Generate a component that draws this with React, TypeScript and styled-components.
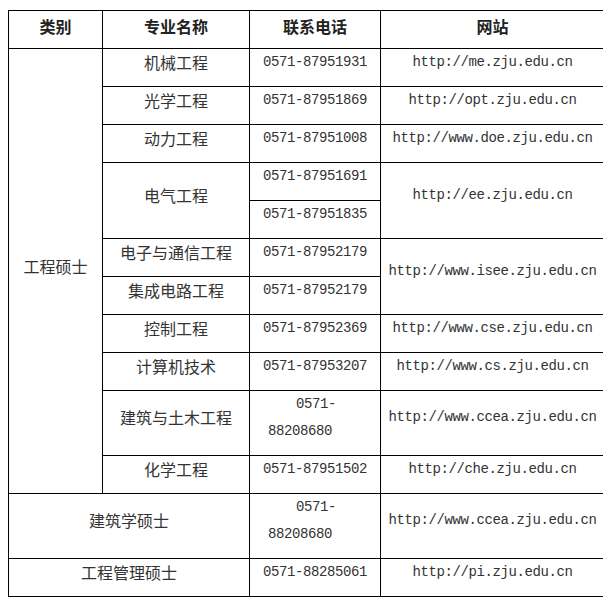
import React from 'react';
import styled, { createGlobalStyle } from 'styled-components';

const GlobalStyle = createGlobalStyle`
  body {
    margin: 8px;
    background: #ffffff;
    color: #333333;
    font-family: "Noto Sans CJK SC", "Liberation Sans", sans-serif;
  }
`;

const Table = styled.table`
  margin-top: 2px;
  width: 596px;
  border-collapse: collapse;
  table-layout: fixed;
`;

const HeadCell = styled.th`
  border: 1px solid #000000;
  padding: 2px 4px 9px;
  line-height: 26px;
  font-size: 16px;
  font-weight: bold;
  color: #222222;
  text-align: center;
  vertical-align: middle;
`;

const Cell = styled.td<{ $mono?: boolean; $tall?: boolean }>`
  border: 1px solid #000000;
  padding: 0 4px 11px;
  line-height: ${(p) => (p.$tall ? '26.5px' : '26px')};
  font-size: ${(p) => (p.$mono ? '14px' : '16px')};
  font-family: ${(p) =>
    p.$mono
      ? '"Liberation Mono", "DejaVu Sans Mono", monospace'
      : '"Noto Sans CJK SC", "Liberation Sans", sans-serif'};
  letter-spacing: ${(p) => (p.$mono ? '-0.4px' : '0')};
  color: #333333;
  text-align: center;
  vertical-align: middle;
`;

const SplitPhone = styled(Cell)`
  text-align: left;
  padding-left: 18px;
`;

const Indent = styled.span`
  display: inline-block;
  padding-left: 28px;
`;

const ccea = 'http://www.ccea.zju.edu.cn';

export default function App() {
  return (
    <>
      <GlobalStyle />
      <Table>
        <colgroup>
          <col style={{ width: 94 }} />
          <col style={{ width: 147 }} />
          <col style={{ width: 131 }} />
          <col style={{ width: 224 }} />
        </colgroup>
        <thead>
          <tr>
            <HeadCell>类别</HeadCell>
            <HeadCell>专业名称</HeadCell>
            <HeadCell>联系电话</HeadCell>
            <HeadCell>网站</HeadCell>
          </tr>
        </thead>
        <tbody>
          <tr>
            <Cell rowSpan={11}>工程硕士</Cell>
            <Cell>机械工程</Cell>
            <Cell $mono>0571-87951931</Cell>
            <Cell $mono>http://me.zju.edu.cn</Cell>
          </tr>
          <tr>
            <Cell>光学工程</Cell>
            <Cell $mono>0571-87951869</Cell>
            <Cell $mono>http://opt.zju.edu.cn</Cell>
          </tr>
          <tr>
            <Cell>动力工程</Cell>
            <Cell $mono>0571-87951008</Cell>
            <Cell $mono>http://www.doe.zju.edu.cn</Cell>
          </tr>
          <tr>
            <Cell rowSpan={2}>电气工程</Cell>
            <Cell $mono>0571-87951691</Cell>
            <Cell $mono rowSpan={2}>
              http://ee.zju.edu.cn
            </Cell>
          </tr>
          <tr>
            <Cell $mono>0571-87951835</Cell>
          </tr>
          <tr>
            <Cell>电子与通信工程</Cell>
            <Cell $mono>0571-87952179</Cell>
            <Cell $mono rowSpan={2}>
              http://www.isee.zju.edu.cn
            </Cell>
          </tr>
          <tr>
            <Cell>集成电路工程</Cell>
            <Cell $mono>0571-87952179</Cell>
          </tr>
          <tr>
            <Cell>控制工程</Cell>
            <Cell $mono>0571-87952369</Cell>
            <Cell $mono>http://www.cse.zju.edu.cn</Cell>
          </tr>
          <tr>
            <Cell>计算机技术</Cell>
            <Cell $mono>0571-87953207</Cell>
            <Cell $mono>http://www.cs.zju.edu.cn</Cell>
          </tr>
          <tr>
            <Cell $tall>建筑与土木工程</Cell>
            <SplitPhone $mono $tall>
              <Indent>0571-</Indent>
              <br />
              88208680
            </SplitPhone>
            <Cell $mono $tall>
              {ccea}
            </Cell>
          </tr>
          <tr>
            <Cell>化学工程</Cell>
            <Cell $mono>0571-87951502</Cell>
            <Cell $mono>http://che.zju.edu.cn</Cell>
          </tr>
          <tr>
            <Cell colSpan={2} $tall>
              建筑学硕士
            </Cell>
            <SplitPhone $mono $tall>
              <Indent>0571-</Indent>
              <br />
              88208680
            </SplitPhone>
            <Cell $mono $tall>
              {ccea}
            </Cell>
          </tr>
          <tr>
            <Cell colSpan={2}>工程管理硕士</Cell>
            <Cell $mono>0571-88285061</Cell>
            <Cell $mono>http://pi.zju.edu.cn</Cell>
          </tr>
        </tbody>
      </Table>
    </>
  );
}
